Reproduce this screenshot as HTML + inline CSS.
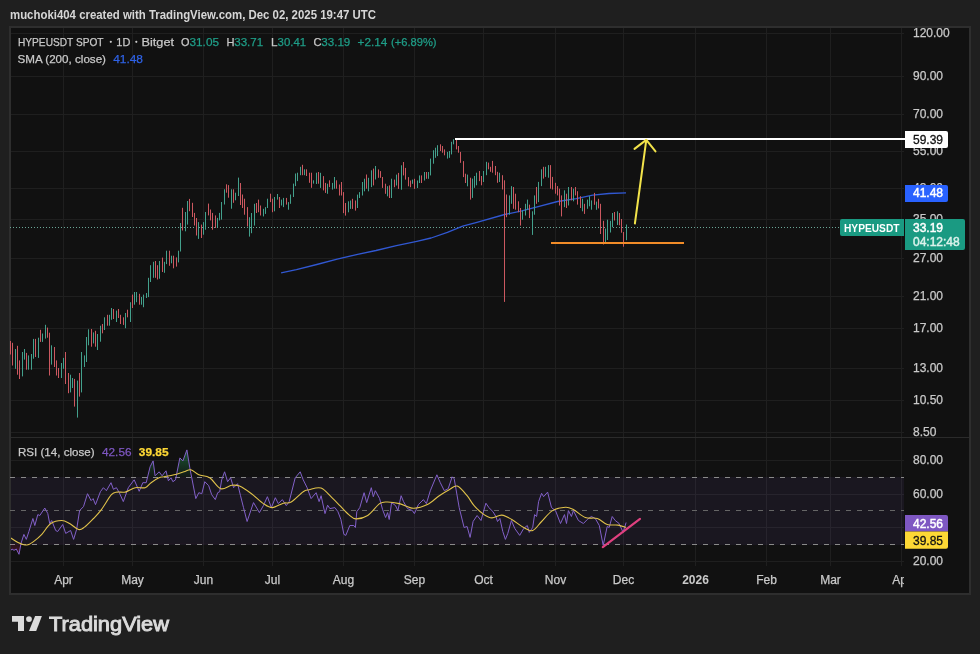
<!DOCTYPE html><html><head><meta charset="utf-8"><style>
html,body{margin:0;padding:0;background:#1f1f1f;width:980px;height:654px;overflow:hidden}
svg{position:absolute;left:0;top:0;will-change:transform}
text{font-family:"Liberation Sans", sans-serif}
</style></head><body>
<svg width="980" height="654" viewBox="0 0 980 654">
<text x="10" y="19.4" font-size="12.6" font-weight="700" fill="#d6d6d6" textLength="366" lengthAdjust="spacingAndGlyphs">muchoki404 created with TradingView.com, Dec 02, 2025 19:47 UTC</text>
<rect x="10" y="27" width="960" height="567" fill="#111111" stroke="#2e2e2e" stroke-width="2"/>
<defs><clipPath id="cp"><rect x="10" y="28" width="894" height="409"/></clipPath>
<clipPath id="cr"><rect x="11" y="438" width="893" height="127"/></clipPath></defs>
<line x1="63.5" y1="28" x2="63.5" y2="566" stroke="#1f1f1f" stroke-width="1"/>
<line x1="132.5" y1="28" x2="132.5" y2="566" stroke="#1f1f1f" stroke-width="1"/>
<line x1="203.5" y1="28" x2="203.5" y2="566" stroke="#1f1f1f" stroke-width="1"/>
<line x1="272.5" y1="28" x2="272.5" y2="566" stroke="#1f1f1f" stroke-width="1"/>
<line x1="343.5" y1="28" x2="343.5" y2="566" stroke="#1f1f1f" stroke-width="1"/>
<line x1="414.5" y1="28" x2="414.5" y2="566" stroke="#1f1f1f" stroke-width="1"/>
<line x1="483.5" y1="28" x2="483.5" y2="566" stroke="#1f1f1f" stroke-width="1"/>
<line x1="555.5" y1="28" x2="555.5" y2="566" stroke="#1f1f1f" stroke-width="1"/>
<line x1="623.5" y1="28" x2="623.5" y2="566" stroke="#1f1f1f" stroke-width="1"/>
<line x1="695.5" y1="28" x2="695.5" y2="566" stroke="#1f1f1f" stroke-width="1"/>
<line x1="766.5" y1="28" x2="766.5" y2="566" stroke="#1f1f1f" stroke-width="1"/>
<line x1="830.5" y1="28" x2="830.5" y2="566" stroke="#1f1f1f" stroke-width="1"/>
<line x1="901.5" y1="28" x2="901.5" y2="566" stroke="#1f1f1f" stroke-width="1"/>
<line x1="11" y1="33.5" x2="904" y2="33.5" stroke="#1f1f1f" stroke-width="1"/>
<line x1="11" y1="76.5" x2="904" y2="76.5" stroke="#1f1f1f" stroke-width="1"/>
<line x1="11" y1="114.5" x2="904" y2="114.5" stroke="#1f1f1f" stroke-width="1"/>
<line x1="11" y1="151.5" x2="904" y2="151.5" stroke="#1f1f1f" stroke-width="1"/>
<line x1="11" y1="188.5" x2="904" y2="188.5" stroke="#1f1f1f" stroke-width="1"/>
<line x1="11" y1="219.5" x2="904" y2="219.5" stroke="#1f1f1f" stroke-width="1"/>
<line x1="11" y1="258.5" x2="904" y2="258.5" stroke="#1f1f1f" stroke-width="1"/>
<line x1="11" y1="296.5" x2="904" y2="296.5" stroke="#1f1f1f" stroke-width="1"/>
<line x1="11" y1="328.5" x2="904" y2="328.5" stroke="#1f1f1f" stroke-width="1"/>
<line x1="11" y1="368.5" x2="904" y2="368.5" stroke="#1f1f1f" stroke-width="1"/>
<line x1="11" y1="400.5" x2="904" y2="400.5" stroke="#1f1f1f" stroke-width="1"/>
<line x1="11" y1="432.5" x2="904" y2="432.5" stroke="#1f1f1f" stroke-width="1"/>
<line x1="11" y1="460.5" x2="904" y2="460.5" stroke="#1f1f1f" stroke-width="1"/>
<line x1="11" y1="494.5" x2="904" y2="494.5" stroke="#1f1f1f" stroke-width="1"/>
<line x1="11" y1="527.5" x2="904" y2="527.5" stroke="#1f1f1f" stroke-width="1"/>
<line x1="11" y1="561.5" x2="904" y2="561.5" stroke="#1f1f1f" stroke-width="1"/>
<line x1="11" y1="437.5" x2="969" y2="437.5" stroke="#2b2b2b" stroke-width="1"/>
<line x1="10" y1="227.5" x2="904" y2="227.5" stroke="#6aa596" stroke-width="1" stroke-dasharray="1 2"/>
<polyline points="281.1,272.9 296.4,269.6 316.8,264.5 337.2,259.2 357.6,254.3 376.0,250.5 396.4,245.6 416.8,241.3 431.1,238.0 447.4,232.3 462.7,226.2 476.0,222.6 504.6,214.5 521.9,210.9 537.2,206.8 557.6,201.5 576.3,198.6 592.7,195.1 609.0,193.5 626.0,192.9" fill="none" stroke="#3158d2" stroke-width="1.3" stroke-linejoin="round"/>
<g clip-path="url(#cp)">
<rect x="10" y="341.0" width="1" height="13.5" fill="#cc5860"/>
<rect x="12" y="342.8" width="1" height="22.7" fill="#cc5860"/>
<rect x="15" y="349.0" width="1" height="19.8" fill="#43a08c"/>
<rect x="17" y="345.8" width="1" height="28.9" fill="#cc5860"/>
<rect x="19" y="360.4" width="1" height="18.6" fill="#cc5860"/>
<rect x="22" y="352.0" width="1" height="24.4" fill="#43a08c"/>
<rect x="24" y="349.0" width="1" height="10.6" fill="#43a08c"/>
<rect x="26" y="352.9" width="1" height="16.8" fill="#cc5860"/>
<rect x="28" y="355.4" width="1" height="14.3" fill="#43a08c"/>
<rect x="31" y="354.0" width="1" height="15.7" fill="#43a08c"/>
<rect x="33" y="338.9" width="1" height="19.8" fill="#43a08c"/>
<rect x="35" y="338.9" width="1" height="18.1" fill="#cc5860"/>
<rect x="38" y="337.7" width="1" height="20.2" fill="#43a08c"/>
<rect x="40" y="329.8" width="1" height="12.1" fill="#cc5860"/>
<rect x="42" y="333.5" width="1" height="8.4" fill="#43a08c"/>
<rect x="45" y="324.8" width="1" height="13.8" fill="#43a08c"/>
<rect x="47" y="327.6" width="1" height="10.1" fill="#cc5860"/>
<rect x="49" y="332.7" width="1" height="42.8" fill="#cc5860"/>
<rect x="51" y="345.3" width="1" height="19.3" fill="#43a08c"/>
<rect x="54" y="347.0" width="1" height="20.0" fill="#cc5860"/>
<rect x="56" y="360.4" width="1" height="15.1" fill="#cc5860"/>
<rect x="58" y="368.0" width="1" height="10.0" fill="#cc5860"/>
<rect x="61" y="363.0" width="1" height="15.0" fill="#43a08c"/>
<rect x="63" y="357.9" width="1" height="10.9" fill="#43a08c"/>
<rect x="65" y="352.0" width="1" height="32.0" fill="#cc5860"/>
<rect x="68" y="373.0" width="1" height="20.2" fill="#cc5860"/>
<rect x="70" y="374.7" width="1" height="17.7" fill="#43a08c"/>
<rect x="72" y="378.0" width="1" height="10.0" fill="#43a08c"/>
<rect x="74" y="378.9" width="1" height="27.7" fill="#cc5860"/>
<rect x="77" y="380.6" width="1" height="37.0" fill="#43a08c"/>
<rect x="79" y="373.0" width="1" height="23.6" fill="#cc5860"/>
<rect x="81" y="352.0" width="1" height="40.4" fill="#43a08c"/>
<rect x="84" y="355.4" width="1" height="11.6" fill="#43a08c"/>
<rect x="86" y="337.0" width="1" height="25.0" fill="#43a08c"/>
<rect x="88" y="329.3" width="1" height="16.0" fill="#43a08c"/>
<rect x="91" y="329.0" width="1" height="17.7" fill="#cc5860"/>
<rect x="93" y="332.4" width="1" height="11.0" fill="#43a08c"/>
<rect x="95" y="330.8" width="1" height="15.9" fill="#cc5860"/>
<rect x="97" y="334.0" width="1" height="16.0" fill="#43a08c"/>
<rect x="100" y="325.7" width="1" height="16.0" fill="#43a08c"/>
<rect x="102" y="324.0" width="1" height="9.3" fill="#cc5860"/>
<rect x="104" y="317.3" width="1" height="12.7" fill="#43a08c"/>
<rect x="107" y="314.8" width="1" height="10.9" fill="#cc5860"/>
<rect x="109" y="314.8" width="1" height="10.9" fill="#43a08c"/>
<rect x="111" y="308.0" width="1" height="11.8" fill="#43a08c"/>
<rect x="113" y="309.0" width="1" height="10.0" fill="#cc5860"/>
<rect x="116" y="310.6" width="1" height="11.4" fill="#43a08c"/>
<rect x="118" y="309.0" width="1" height="9.0" fill="#cc5860"/>
<rect x="120" y="314.8" width="1" height="9.2" fill="#cc5860"/>
<rect x="123" y="317.3" width="1" height="7.6" fill="#cc5860"/>
<rect x="125" y="313.0" width="1" height="15.2" fill="#43a08c"/>
<rect x="127" y="309.7" width="1" height="7.6" fill="#cc5860"/>
<rect x="130" y="302.2" width="1" height="19.8" fill="#43a08c"/>
<rect x="132" y="294.6" width="1" height="13.4" fill="#cc5860"/>
<rect x="134" y="292.0" width="1" height="12.7" fill="#43a08c"/>
<rect x="136" y="292.0" width="1" height="10.2" fill="#43a08c"/>
<rect x="139" y="293.8" width="1" height="10.9" fill="#cc5860"/>
<rect x="141" y="297.0" width="1" height="7.7" fill="#43a08c"/>
<rect x="143" y="294.6" width="1" height="12.6" fill="#43a08c"/>
<rect x="146" y="293.0" width="1" height="5.0" fill="#43a08c"/>
<rect x="148" y="277.8" width="1" height="19.3" fill="#43a08c"/>
<rect x="150" y="265.2" width="1" height="16.8" fill="#43a08c"/>
<rect x="153" y="261.8" width="1" height="16.0" fill="#43a08c"/>
<rect x="155" y="261.0" width="1" height="16.8" fill="#cc5860"/>
<rect x="157" y="265.2" width="1" height="14.3" fill="#cc5860"/>
<rect x="159" y="261.0" width="1" height="17.7" fill="#43a08c"/>
<rect x="162" y="257.6" width="1" height="14.4" fill="#cc5860"/>
<rect x="164" y="261.8" width="1" height="11.0" fill="#43a08c"/>
<rect x="166" y="250.7" width="1" height="13.4" fill="#43a08c"/>
<rect x="169" y="250.7" width="1" height="15.1" fill="#cc5860"/>
<rect x="171" y="255.7" width="1" height="7.6" fill="#43a08c"/>
<rect x="173" y="255.7" width="1" height="12.6" fill="#cc5860"/>
<rect x="176" y="257.4" width="1" height="9.2" fill="#cc5860"/>
<rect x="178" y="250.7" width="1" height="11.7" fill="#43a08c"/>
<rect x="180" y="223.0" width="1" height="28.5" fill="#43a08c"/>
<rect x="182" y="207.8" width="1" height="22.7" fill="#cc5860"/>
<rect x="185" y="212.0" width="1" height="19.3" fill="#43a08c"/>
<rect x="187" y="201.0" width="1" height="23.6" fill="#43a08c"/>
<rect x="189" y="198.9" width="1" height="12.3" fill="#cc5860"/>
<rect x="192" y="202.8" width="1" height="14.2" fill="#cc5860"/>
<rect x="194" y="212.9" width="1" height="12.6" fill="#cc5860"/>
<rect x="196" y="218.0" width="1" height="17.5" fill="#cc5860"/>
<rect x="198" y="222.1" width="1" height="16.8" fill="#43a08c"/>
<rect x="201" y="224.6" width="1" height="13.4" fill="#cc5860"/>
<rect x="203" y="222.1" width="1" height="12.6" fill="#43a08c"/>
<rect x="205" y="212.0" width="1" height="17.7" fill="#43a08c"/>
<rect x="208" y="203.6" width="1" height="11.8" fill="#cc5860"/>
<rect x="210" y="209.5" width="1" height="10.9" fill="#cc5860"/>
<rect x="212" y="212.9" width="1" height="16.8" fill="#cc5860"/>
<rect x="215" y="215.4" width="1" height="12.6" fill="#cc5860"/>
<rect x="217" y="217.9" width="1" height="9.2" fill="#43a08c"/>
<rect x="219" y="212.9" width="1" height="7.5" fill="#43a08c"/>
<rect x="221" y="202.0" width="1" height="17.6" fill="#43a08c"/>
<rect x="224" y="189.3" width="1" height="15.2" fill="#43a08c"/>
<rect x="226" y="184.3" width="1" height="8.4" fill="#cc5860"/>
<rect x="228" y="185.1" width="1" height="12.6" fill="#cc5860"/>
<rect x="231" y="189.3" width="1" height="19.4" fill="#43a08c"/>
<rect x="233" y="189.3" width="1" height="13.5" fill="#cc5860"/>
<rect x="235" y="192.7" width="1" height="7.6" fill="#43a08c"/>
<rect x="238" y="177.6" width="1" height="18.4" fill="#43a08c"/>
<rect x="240" y="183.0" width="1" height="22.0" fill="#cc5860"/>
<rect x="242" y="194.5" width="1" height="13.5" fill="#cc5860"/>
<rect x="244" y="198.7" width="1" height="16.0" fill="#cc5860"/>
<rect x="247" y="207.1" width="1" height="19.4" fill="#cc5860"/>
<rect x="249" y="217.2" width="1" height="19.4" fill="#43a08c"/>
<rect x="251" y="213.0" width="1" height="20.2" fill="#43a08c"/>
<rect x="254" y="203.8" width="1" height="21.8" fill="#43a08c"/>
<rect x="256" y="203.0" width="1" height="10.0" fill="#cc5860"/>
<rect x="258" y="199.6" width="1" height="12.6" fill="#cc5860"/>
<rect x="260" y="205.5" width="1" height="10.0" fill="#cc5860"/>
<rect x="263" y="208.8" width="1" height="7.6" fill="#43a08c"/>
<rect x="265" y="207.1" width="1" height="6.8" fill="#43a08c"/>
<rect x="267" y="198.7" width="1" height="9.3" fill="#43a08c"/>
<rect x="270" y="193.7" width="1" height="8.4" fill="#cc5860"/>
<rect x="272" y="198.7" width="1" height="13.5" fill="#cc5860"/>
<rect x="274" y="197.0" width="1" height="14.3" fill="#43a08c"/>
<rect x="277" y="194.0" width="1" height="5.6" fill="#43a08c"/>
<rect x="279" y="197.0" width="1" height="11.0" fill="#cc5860"/>
<rect x="281" y="199.6" width="1" height="5.9" fill="#43a08c"/>
<rect x="283" y="197.9" width="1" height="9.2" fill="#43a08c"/>
<rect x="286" y="197.9" width="1" height="6.7" fill="#cc5860"/>
<rect x="288" y="202.1" width="1" height="7.6" fill="#43a08c"/>
<rect x="290" y="194.5" width="1" height="9.3" fill="#43a08c"/>
<rect x="293" y="183.6" width="1" height="13.4" fill="#43a08c"/>
<rect x="295" y="173.5" width="1" height="12.6" fill="#43a08c"/>
<rect x="297" y="172.7" width="1" height="8.4" fill="#43a08c"/>
<rect x="300" y="166.8" width="1" height="8.4" fill="#43a08c"/>
<rect x="302" y="164.8" width="1" height="10.4" fill="#cc5860"/>
<rect x="304" y="169.3" width="1" height="5.9" fill="#43a08c"/>
<rect x="306" y="169.3" width="1" height="6.7" fill="#cc5860"/>
<rect x="309" y="172.7" width="1" height="10.1" fill="#cc5860"/>
<rect x="311" y="172.7" width="1" height="15.1" fill="#cc5860"/>
<rect x="313" y="180.3" width="1" height="3.3" fill="#43a08c"/>
<rect x="316" y="172.7" width="1" height="11.3" fill="#43a08c"/>
<rect x="318" y="172.0" width="1" height="11.7" fill="#cc5860"/>
<rect x="320" y="172.8" width="1" height="15.1" fill="#43a08c"/>
<rect x="323" y="176.1" width="1" height="14.3" fill="#cc5860"/>
<rect x="325" y="182.9" width="1" height="10.0" fill="#cc5860"/>
<rect x="327" y="183.7" width="1" height="10.1" fill="#43a08c"/>
<rect x="329" y="180.3" width="1" height="6.8" fill="#cc5860"/>
<rect x="332" y="182.9" width="1" height="6.7" fill="#43a08c"/>
<rect x="334" y="177.0" width="1" height="11.7" fill="#43a08c"/>
<rect x="336" y="180.3" width="1" height="8.4" fill="#cc5860"/>
<rect x="339" y="184.5" width="1" height="11.0" fill="#cc5860"/>
<rect x="341" y="182.0" width="1" height="13.5" fill="#cc5860"/>
<rect x="343" y="192.1" width="1" height="21.0" fill="#cc5860"/>
<rect x="345" y="203.0" width="1" height="12.6" fill="#cc5860"/>
<rect x="348" y="201.3" width="1" height="11.0" fill="#43a08c"/>
<rect x="350" y="200.5" width="1" height="8.4" fill="#43a08c"/>
<rect x="352" y="198.8" width="1" height="10.1" fill="#cc5860"/>
<rect x="355" y="200.5" width="1" height="10.1" fill="#cc5860"/>
<rect x="357" y="194.6" width="1" height="13.4" fill="#43a08c"/>
<rect x="359" y="192.1" width="1" height="5.9" fill="#43a08c"/>
<rect x="362" y="182.0" width="1" height="13.5" fill="#43a08c"/>
<rect x="364" y="178.7" width="1" height="12.6" fill="#43a08c"/>
<rect x="366" y="174.5" width="1" height="14.2" fill="#cc5860"/>
<rect x="368" y="177.8" width="1" height="13.5" fill="#43a08c"/>
<rect x="371" y="170.3" width="1" height="16.8" fill="#43a08c"/>
<rect x="373" y="168.6" width="1" height="16.8" fill="#cc5860"/>
<rect x="375" y="166.0" width="1" height="13.5" fill="#43a08c"/>
<rect x="378" y="169.4" width="1" height="8.4" fill="#cc5860"/>
<rect x="380" y="171.1" width="1" height="6.7" fill="#cc5860"/>
<rect x="382" y="177.0" width="1" height="10.9" fill="#cc5860"/>
<rect x="385" y="183.7" width="1" height="10.1" fill="#cc5860"/>
<rect x="387" y="186.2" width="1" height="10.1" fill="#43a08c"/>
<rect x="389" y="185.4" width="1" height="12.6" fill="#cc5860"/>
<rect x="391" y="178.7" width="1" height="19.3" fill="#43a08c"/>
<rect x="394" y="179.6" width="1" height="7.6" fill="#cc5860"/>
<rect x="396" y="174.6" width="1" height="10.9" fill="#43a08c"/>
<rect x="398" y="172.9" width="1" height="16.0" fill="#cc5860"/>
<rect x="401" y="165.3" width="1" height="24.4" fill="#43a08c"/>
<rect x="403" y="162.0" width="1" height="13.4" fill="#cc5860"/>
<rect x="405" y="167.9" width="1" height="11.7" fill="#cc5860"/>
<rect x="408" y="177.1" width="1" height="9.2" fill="#cc5860"/>
<rect x="410" y="180.5" width="1" height="6.7" fill="#cc5860"/>
<rect x="412" y="179.6" width="1" height="4.2" fill="#43a08c"/>
<rect x="414" y="178.8" width="1" height="10.1" fill="#cc5860"/>
<rect x="417" y="180.5" width="1" height="7.5" fill="#43a08c"/>
<rect x="419" y="175.4" width="1" height="7.6" fill="#43a08c"/>
<rect x="421" y="175.4" width="1" height="7.6" fill="#cc5860"/>
<rect x="424" y="172.0" width="1" height="8.5" fill="#43a08c"/>
<rect x="426" y="172.0" width="1" height="6.8" fill="#cc5860"/>
<rect x="428" y="172.0" width="1" height="6.8" fill="#43a08c"/>
<rect x="430" y="158.6" width="1" height="16.8" fill="#43a08c"/>
<rect x="433" y="150.2" width="1" height="13.5" fill="#43a08c"/>
<rect x="435" y="147.7" width="1" height="10.1" fill="#43a08c"/>
<rect x="437" y="145.2" width="1" height="10.9" fill="#43a08c"/>
<rect x="440" y="144.3" width="1" height="6.7" fill="#cc5860"/>
<rect x="442" y="146.0" width="1" height="6.7" fill="#cc5860"/>
<rect x="444" y="149.4" width="1" height="5.9" fill="#cc5860"/>
<rect x="447" y="151.9" width="1" height="6.7" fill="#43a08c"/>
<rect x="449" y="151.0" width="1" height="6.8" fill="#43a08c"/>
<rect x="451" y="141.8" width="1" height="12.6" fill="#43a08c"/>
<rect x="453" y="139.3" width="1" height="5.0" fill="#43a08c"/>
<rect x="456" y="139.3" width="1" height="10.1" fill="#cc5860"/>
<rect x="458" y="146.0" width="1" height="6.7" fill="#cc5860"/>
<rect x="460" y="151.9" width="1" height="10.9" fill="#cc5860"/>
<rect x="463" y="161.1" width="1" height="16.0" fill="#cc5860"/>
<rect x="465" y="173.7" width="1" height="9.3" fill="#cc5860"/>
<rect x="467" y="174.6" width="1" height="11.7" fill="#43a08c"/>
<rect x="470" y="177.7" width="1" height="21.9" fill="#cc5860"/>
<rect x="472" y="178.6" width="1" height="19.3" fill="#43a08c"/>
<rect x="474" y="176.0" width="1" height="11.8" fill="#43a08c"/>
<rect x="476" y="172.7" width="1" height="12.6" fill="#43a08c"/>
<rect x="479" y="171.0" width="1" height="10.1" fill="#cc5860"/>
<rect x="481" y="176.0" width="1" height="9.3" fill="#cc5860"/>
<rect x="483" y="171.0" width="1" height="11.0" fill="#43a08c"/>
<rect x="486" y="161.8" width="1" height="13.4" fill="#43a08c"/>
<rect x="488" y="162.6" width="1" height="6.7" fill="#cc5860"/>
<rect x="490" y="166.8" width="1" height="5.0" fill="#cc5860"/>
<rect x="492" y="160.9" width="1" height="11.8" fill="#cc5860"/>
<rect x="495" y="166.0" width="1" height="9.2" fill="#cc5860"/>
<rect x="497" y="171.8" width="1" height="11.0" fill="#cc5860"/>
<rect x="499" y="172.7" width="1" height="9.3" fill="#43a08c"/>
<rect x="502" y="175.2" width="1" height="14.3" fill="#cc5860"/>
<rect x="504" y="180.3" width="1" height="121.6" fill="#cc5860"/>
<rect x="506" y="194.5" width="1" height="22.7" fill="#cc5860"/>
<rect x="509" y="195.4" width="1" height="19.3" fill="#43a08c"/>
<rect x="511" y="186.1" width="1" height="17.7" fill="#43a08c"/>
<rect x="513" y="187.0" width="1" height="21.8" fill="#cc5860"/>
<rect x="515" y="193.7" width="1" height="16.0" fill="#cc5860"/>
<rect x="518" y="201.3" width="1" height="10.9" fill="#cc5860"/>
<rect x="520" y="208.0" width="1" height="17.6" fill="#cc5860"/>
<rect x="522" y="210.5" width="1" height="9.2" fill="#43a08c"/>
<rect x="525" y="203.8" width="1" height="11.7" fill="#43a08c"/>
<rect x="527" y="199.6" width="1" height="10.1" fill="#43a08c"/>
<rect x="529" y="204.6" width="1" height="13.5" fill="#cc5860"/>
<rect x="532" y="211.3" width="1" height="23.6" fill="#43a08c"/>
<rect x="534" y="195.4" width="1" height="19.3" fill="#43a08c"/>
<rect x="536" y="187.0" width="1" height="16.8" fill="#cc5860"/>
<rect x="538" y="181.9" width="1" height="20.2" fill="#43a08c"/>
<rect x="541" y="169.3" width="1" height="16.8" fill="#43a08c"/>
<rect x="543" y="166.8" width="1" height="11.8" fill="#cc5860"/>
<rect x="545" y="166.8" width="1" height="10.1" fill="#43a08c"/>
<rect x="548" y="165.1" width="1" height="12.6" fill="#43a08c"/>
<rect x="550" y="165.1" width="1" height="23.6" fill="#cc5860"/>
<rect x="552" y="176.9" width="1" height="12.6" fill="#cc5860"/>
<rect x="555" y="182.8" width="1" height="10.9" fill="#cc5860"/>
<rect x="557" y="186.1" width="1" height="9.3" fill="#cc5860"/>
<rect x="559" y="188.7" width="1" height="16.8" fill="#cc5860"/>
<rect x="561" y="195.4" width="1" height="21.0" fill="#cc5860"/>
<rect x="564" y="190.3" width="1" height="16.8" fill="#43a08c"/>
<rect x="566" y="193.7" width="1" height="14.3" fill="#cc5860"/>
<rect x="568" y="187.0" width="1" height="18.5" fill="#43a08c"/>
<rect x="571" y="187.0" width="1" height="13.4" fill="#cc5860"/>
<rect x="573" y="188.7" width="1" height="12.6" fill="#43a08c"/>
<rect x="575" y="187.0" width="1" height="8.4" fill="#cc5860"/>
<rect x="577" y="191.2" width="1" height="13.4" fill="#cc5860"/>
<rect x="580" y="196.2" width="1" height="11.8" fill="#cc5860"/>
<rect x="582" y="198.7" width="1" height="12.6" fill="#43a08c"/>
<rect x="584" y="203.8" width="1" height="10.1" fill="#cc5860"/>
<rect x="587" y="199.6" width="1" height="9.2" fill="#43a08c"/>
<rect x="589" y="196.2" width="1" height="10.1" fill="#43a08c"/>
<rect x="591" y="200.4" width="1" height="9.3" fill="#43a08c"/>
<rect x="594" y="192.9" width="1" height="11.9" fill="#cc5860"/>
<rect x="596" y="201.6" width="1" height="8.2" fill="#43a08c"/>
<rect x="598" y="198.8" width="1" height="9.6" fill="#cc5860"/>
<rect x="600" y="203.8" width="1" height="30.2" fill="#cc5860"/>
<rect x="603" y="220.8" width="1" height="23.7" fill="#cc5860"/>
<rect x="605" y="228.6" width="1" height="14.4" fill="#43a08c"/>
<rect x="607" y="219.7" width="1" height="20.3" fill="#43a08c"/>
<rect x="610" y="220.8" width="1" height="11.7" fill="#43a08c"/>
<rect x="612" y="213.0" width="1" height="14.2" fill="#43a08c"/>
<rect x="614" y="212.0" width="1" height="8.5" fill="#cc5860"/>
<rect x="617" y="211.3" width="1" height="13.7" fill="#43a08c"/>
<rect x="619" y="213.0" width="1" height="12.3" fill="#cc5860"/>
<rect x="621" y="219.0" width="1" height="13.7" fill="#cc5860"/>
<rect x="623" y="232.0" width="1" height="14.7" fill="#cc5860"/>
<rect x="626" y="224.5" width="1" height="15.7" fill="#43a08c"/>
</g>
<line x1="455" y1="139" x2="905" y2="139" stroke="#ffffff" stroke-width="2"/>
<line x1="551" y1="243" x2="684" y2="243" stroke="#f28c28" stroke-width="2"/>
<polyline points="634.9,223.5 646.3,139.9" fill="none" stroke="#f2e34a" stroke-width="2" stroke-linecap="round"/>
<polyline points="634.5,148.9 646.3,139.9 655.5,151.4" fill="none" stroke="#f2e34a" stroke-width="2" stroke-linecap="round" stroke-linejoin="round"/>
<rect x="11" y="477" width="893" height="68" fill="#7e57c2" fill-opacity="0.09"/>
<line x1="10" y1="477.5" x2="904" y2="477.5" stroke="#8a8a8a" stroke-width="1" stroke-dasharray="5 6"/>
<line x1="10" y1="510.5" x2="904" y2="510.5" stroke="#666666" stroke-width="1" stroke-dasharray="5 6"/>
<line x1="10" y1="544.5" x2="904" y2="544.5" stroke="#8a8a8a" stroke-width="1" stroke-dasharray="5 6"/>
<g clip-path="url(#cr)">
<clipPath id="ob"><rect x="11" y="438" width="893" height="38.9"/></clipPath>
<clipPath id="os"><rect x="11" y="543.5" width="893" height="21.5"/></clipPath>
<linearGradient id="gob" gradientUnits="userSpaceOnUse" x1="0" y1="445" x2="0" y2="477"><stop offset="0" stop-color="#26a65b" stop-opacity="0.55"/><stop offset="1" stop-color="#26a65b" stop-opacity="0.05"/></linearGradient>
<linearGradient id="gos" gradientUnits="userSpaceOnUse" x1="0" y1="544" x2="0" y2="561"><stop offset="0" stop-color="#c2185b" stop-opacity="0.1"/><stop offset="1" stop-color="#c2185b" stop-opacity="0.5"/></linearGradient>
<polygon clip-path="url(#ob)" points="10.0,476.9 10.0,551.3 12.0,549.0 14.0,550.3 16.3,549.0 19.0,554.3 21.0,543.4 23.9,534.4 26.3,539.4 28.9,531.5 32.9,518.5 34.8,525.5 37.8,514.6 39.8,515.5 44.8,508.0 47.8,513.6 49.7,523.5 51.7,520.5 55.7,530.5 57.7,531.5 62.7,524.5 65.7,533.4 70.6,530.5 73.6,539.4 76.6,529.5 79.6,510.6 83.5,506.6 87.5,493.7 91.1,500.6 93.1,498.6 95.5,504.6 100.4,491.7 103.4,487.7 106.4,490.7 111.0,482.7 113.4,489.3 116.4,487.7 119.3,492.7 123.3,501.6 128.3,487.7 134.2,479.8 139.2,491.3 142.8,482.7 146.2,482.7 150.1,466.8 153.1,460.9 155.1,475.8 159.1,471.8 162.1,475.8 166.0,470.8 168.4,480.8 171.0,477.8 172.9,481.7 175.5,479.8 179.9,457.9 182.9,460.9 186.9,449.9 189.8,467.8 195.8,498.6 198.8,492.7 201.8,493.7 204.8,481.7 208.7,485.7 211.7,494.7 215.3,499.6 217.7,492.7 219.7,491.7 221.7,479.8 224.6,471.8 227.6,481.7 230.6,477.8 233.6,487.7 237.6,483.7 240.5,495.7 243.5,507.6 247.1,521.5 253.5,502.6 259.4,512.6 263.4,505.6 267.4,496.7 271.4,507.6 275.3,497.7 278.3,503.6 282.3,499.6 286.3,505.6 289.2,501.6 295.2,477.8 300.2,471.8 303.2,479.8 307.1,487.7 311.1,498.6 316.1,492.7 319.1,501.6 321.1,495.7 325.0,513.6 327.6,505.2 329.9,508.6 334.9,507.6 337.9,511.6 340.9,519.5 343.9,534.4 345.8,535.4 349.8,525.5 353.8,525.5 355.4,527.5 356.8,511.6 359.8,507.6 364.1,492.7 366.7,502.6 371.3,487.7 373.3,496.7 375.3,490.7 379.6,498.6 382.6,509.6 385.6,517.5 387.6,512.6 389.2,519.5 391.6,502.6 395.5,505.6 397.9,510.6 401.1,495.7 403.5,501.6 407.5,508.6 412.4,510.6 414.4,513.6 418.4,504.6 423.4,499.6 426.4,503.6 430.3,490.7 436.9,474.8 440.3,482.7 444.3,490.7 448.2,488.7 452.2,476.8 454.2,478.8 459.2,507.6 464.1,527.5 467.1,526.5 470.1,537.4 473.1,521.5 477.1,515.5 481.0,520.5 485.9,503.2 488.9,507.6 492.9,511.6 495.9,516.5 497.5,521.5 499.9,518.5 502.8,531.5 505.4,539.4 507.8,533.4 511.4,520.5 514.8,528.5 519.7,535.4 523.7,528.5 527.3,525.5 529.3,532.4 532.7,527.5 534.6,514.6 536.6,516.5 538.6,501.6 541.6,493.3 543.6,496.7 547.6,492.1 551.5,507.6 555.5,510.6 560.5,523.5 564.5,514.6 566.5,523.5 568.4,510.6 571.4,516.5 573.4,510.6 578.4,520.5 583.4,523.5 587.3,519.5 591.3,516.5 595.3,518.5 599.3,525.5 603.2,545.4 607.2,526.5 609.2,527.5 612.2,516.5 615.2,520.5 619.1,523.5 623.1,532.4 626.1,522.5 626.1,476.9" fill="url(#gob)"/>
<polygon clip-path="url(#os)" points="10.0,543.5 10.0,551.3 12.0,549.0 14.0,550.3 16.3,549.0 19.0,554.3 21.0,543.4 23.9,534.4 26.3,539.4 28.9,531.5 32.9,518.5 34.8,525.5 37.8,514.6 39.8,515.5 44.8,508.0 47.8,513.6 49.7,523.5 51.7,520.5 55.7,530.5 57.7,531.5 62.7,524.5 65.7,533.4 70.6,530.5 73.6,539.4 76.6,529.5 79.6,510.6 83.5,506.6 87.5,493.7 91.1,500.6 93.1,498.6 95.5,504.6 100.4,491.7 103.4,487.7 106.4,490.7 111.0,482.7 113.4,489.3 116.4,487.7 119.3,492.7 123.3,501.6 128.3,487.7 134.2,479.8 139.2,491.3 142.8,482.7 146.2,482.7 150.1,466.8 153.1,460.9 155.1,475.8 159.1,471.8 162.1,475.8 166.0,470.8 168.4,480.8 171.0,477.8 172.9,481.7 175.5,479.8 179.9,457.9 182.9,460.9 186.9,449.9 189.8,467.8 195.8,498.6 198.8,492.7 201.8,493.7 204.8,481.7 208.7,485.7 211.7,494.7 215.3,499.6 217.7,492.7 219.7,491.7 221.7,479.8 224.6,471.8 227.6,481.7 230.6,477.8 233.6,487.7 237.6,483.7 240.5,495.7 243.5,507.6 247.1,521.5 253.5,502.6 259.4,512.6 263.4,505.6 267.4,496.7 271.4,507.6 275.3,497.7 278.3,503.6 282.3,499.6 286.3,505.6 289.2,501.6 295.2,477.8 300.2,471.8 303.2,479.8 307.1,487.7 311.1,498.6 316.1,492.7 319.1,501.6 321.1,495.7 325.0,513.6 327.6,505.2 329.9,508.6 334.9,507.6 337.9,511.6 340.9,519.5 343.9,534.4 345.8,535.4 349.8,525.5 353.8,525.5 355.4,527.5 356.8,511.6 359.8,507.6 364.1,492.7 366.7,502.6 371.3,487.7 373.3,496.7 375.3,490.7 379.6,498.6 382.6,509.6 385.6,517.5 387.6,512.6 389.2,519.5 391.6,502.6 395.5,505.6 397.9,510.6 401.1,495.7 403.5,501.6 407.5,508.6 412.4,510.6 414.4,513.6 418.4,504.6 423.4,499.6 426.4,503.6 430.3,490.7 436.9,474.8 440.3,482.7 444.3,490.7 448.2,488.7 452.2,476.8 454.2,478.8 459.2,507.6 464.1,527.5 467.1,526.5 470.1,537.4 473.1,521.5 477.1,515.5 481.0,520.5 485.9,503.2 488.9,507.6 492.9,511.6 495.9,516.5 497.5,521.5 499.9,518.5 502.8,531.5 505.4,539.4 507.8,533.4 511.4,520.5 514.8,528.5 519.7,535.4 523.7,528.5 527.3,525.5 529.3,532.4 532.7,527.5 534.6,514.6 536.6,516.5 538.6,501.6 541.6,493.3 543.6,496.7 547.6,492.1 551.5,507.6 555.5,510.6 560.5,523.5 564.5,514.6 566.5,523.5 568.4,510.6 571.4,516.5 573.4,510.6 578.4,520.5 583.4,523.5 587.3,519.5 591.3,516.5 595.3,518.5 599.3,525.5 603.2,545.4 607.2,526.5 609.2,527.5 612.2,516.5 615.2,520.5 619.1,523.5 623.1,532.4 626.1,522.5 626.1,543.5" fill="url(#gos)"/>
<polyline points="10.0,551.3 12.0,549.0 14.0,550.3 16.3,549.0 19.0,554.3 21.0,543.4 23.9,534.4 26.3,539.4 28.9,531.5 32.9,518.5 34.8,525.5 37.8,514.6 39.8,515.5 44.8,508.0 47.8,513.6 49.7,523.5 51.7,520.5 55.7,530.5 57.7,531.5 62.7,524.5 65.7,533.4 70.6,530.5 73.6,539.4 76.6,529.5 79.6,510.6 83.5,506.6 87.5,493.7 91.1,500.6 93.1,498.6 95.5,504.6 100.4,491.7 103.4,487.7 106.4,490.7 111.0,482.7 113.4,489.3 116.4,487.7 119.3,492.7 123.3,501.6 128.3,487.7 134.2,479.8 139.2,491.3 142.8,482.7 146.2,482.7 150.1,466.8 153.1,460.9 155.1,475.8 159.1,471.8 162.1,475.8 166.0,470.8 168.4,480.8 171.0,477.8 172.9,481.7 175.5,479.8 179.9,457.9 182.9,460.9 186.9,449.9 189.8,467.8 195.8,498.6 198.8,492.7 201.8,493.7 204.8,481.7 208.7,485.7 211.7,494.7 215.3,499.6 217.7,492.7 219.7,491.7 221.7,479.8 224.6,471.8 227.6,481.7 230.6,477.8 233.6,487.7 237.6,483.7 240.5,495.7 243.5,507.6 247.1,521.5 253.5,502.6 259.4,512.6 263.4,505.6 267.4,496.7 271.4,507.6 275.3,497.7 278.3,503.6 282.3,499.6 286.3,505.6 289.2,501.6 295.2,477.8 300.2,471.8 303.2,479.8 307.1,487.7 311.1,498.6 316.1,492.7 319.1,501.6 321.1,495.7 325.0,513.6 327.6,505.2 329.9,508.6 334.9,507.6 337.9,511.6 340.9,519.5 343.9,534.4 345.8,535.4 349.8,525.5 353.8,525.5 355.4,527.5 356.8,511.6 359.8,507.6 364.1,492.7 366.7,502.6 371.3,487.7 373.3,496.7 375.3,490.7 379.6,498.6 382.6,509.6 385.6,517.5 387.6,512.6 389.2,519.5 391.6,502.6 395.5,505.6 397.9,510.6 401.1,495.7 403.5,501.6 407.5,508.6 412.4,510.6 414.4,513.6 418.4,504.6 423.4,499.6 426.4,503.6 430.3,490.7 436.9,474.8 440.3,482.7 444.3,490.7 448.2,488.7 452.2,476.8 454.2,478.8 459.2,507.6 464.1,527.5 467.1,526.5 470.1,537.4 473.1,521.5 477.1,515.5 481.0,520.5 485.9,503.2 488.9,507.6 492.9,511.6 495.9,516.5 497.5,521.5 499.9,518.5 502.8,531.5 505.4,539.4 507.8,533.4 511.4,520.5 514.8,528.5 519.7,535.4 523.7,528.5 527.3,525.5 529.3,532.4 532.7,527.5 534.6,514.6 536.6,516.5 538.6,501.6 541.6,493.3 543.6,496.7 547.6,492.1 551.5,507.6 555.5,510.6 560.5,523.5 564.5,514.6 566.5,523.5 568.4,510.6 571.4,516.5 573.4,510.6 578.4,520.5 583.4,523.5 587.3,519.5 591.3,516.5 595.3,518.5 599.3,525.5 603.2,545.4 607.2,526.5 609.2,527.5 612.2,516.5 615.2,520.5 619.1,523.5 623.1,532.4 626.1,522.5" fill="none" stroke="#8260c8" stroke-width="1" stroke-linejoin="round"/>
<path d="M10.0,537.4 C11.3,538.2 15.2,541.1 18.0,542.4 C20.8,543.7 24.3,545.2 26.9,545.0 C29.5,544.8 31.3,543.2 33.8,541.4 C36.3,539.6 39.0,537.4 41.8,534.4 C44.6,531.4 47.4,525.8 50.7,523.5 C54.0,521.2 58.6,520.5 61.7,520.5 C64.8,520.5 66.8,522.0 69.6,523.5 C72.4,525.0 76.1,528.9 78.6,529.5 C81.1,530.1 82.0,528.9 84.5,527.1 C87.0,525.3 90.7,521.4 93.5,518.5 C96.3,515.6 98.4,513.6 101.4,509.6 C104.4,505.6 108.8,497.6 111.4,494.7 C114.1,491.8 115.0,492.5 117.3,492.1 C119.6,491.7 122.3,492.8 125.3,492.1 C128.3,491.4 131.9,488.4 135.2,487.7 C138.5,487.0 142.5,488.5 145.2,487.7 C147.8,486.9 148.8,484.3 151.1,482.7 C153.4,481.1 156.9,478.8 159.1,477.8 C161.2,476.8 161.5,477.3 164.0,476.8 C166.5,476.3 170.7,475.6 174.0,474.8 C177.3,474.0 181.1,472.6 183.9,471.8 C186.7,471.0 188.3,469.3 190.8,469.8 C193.3,470.3 195.7,473.5 198.8,474.8 C202.0,476.1 206.0,475.5 209.7,477.8 C213.3,480.1 217.0,487.4 220.7,488.7 C224.3,489.9 228.5,485.7 231.6,485.3 C234.7,484.9 236.2,484.7 239.5,486.1 C242.8,487.5 247.5,490.8 251.5,493.7 C255.5,496.6 259.9,501.3 263.4,503.6 C266.9,505.9 269.0,507.7 272.3,507.6 C275.6,507.5 280.2,504.1 283.3,503.2 C286.4,502.3 287.9,503.9 291.2,502.0 C294.5,500.1 300.2,493.8 303.2,491.7 C306.2,489.6 306.1,490.3 309.1,489.7 C312.1,489.1 317.3,486.8 321.1,488.1 C324.9,489.4 328.8,494.8 331.9,497.7 C335.0,500.6 337.1,502.8 339.9,505.6 C342.7,508.4 346.1,512.4 348.8,514.6 C351.5,516.8 352.7,518.8 355.8,518.9 C358.9,519.0 363.7,518.0 367.7,515.5 C371.7,513.0 376.3,505.9 379.6,503.6 C382.9,501.4 384.3,502.0 387.6,502.0 C390.9,502.0 395.2,502.6 399.5,503.6 C403.8,504.6 408.8,508.0 413.4,508.2 C418.0,508.4 423.1,506.7 427.4,504.6 C431.7,502.5 435.7,498.2 439.3,495.7 C442.9,493.2 446.2,491.3 449.2,489.7 C452.2,488.1 454.2,485.1 457.2,486.1 C460.2,487.1 464.3,492.4 467.1,495.7 C469.9,498.9 471.3,502.5 474.1,505.6 C476.9,508.8 481.0,512.6 484.0,514.6 C487.0,516.6 488.9,517.8 491.9,517.9 C494.9,518.0 498.5,514.8 501.8,515.1 C505.1,515.4 508.1,517.4 511.8,519.5 C515.5,521.6 520.2,525.7 523.7,527.5 C527.2,529.3 529.7,531.5 532.7,530.5 C535.7,529.5 538.3,524.8 541.6,521.5 C544.9,518.2 548.5,513.0 552.5,510.6 C556.5,508.2 562.0,507.4 565.5,507.2 C569.0,507.0 570.1,507.9 573.4,509.6 C576.7,511.3 581.3,516.0 585.3,517.5 C589.3,519.0 593.6,517.3 597.3,518.5 C600.9,519.7 603.7,523.4 607.2,524.5 C610.7,525.6 615.0,524.6 618.1,525.1 C621.2,525.6 624.8,527.1 626.1,527.5" fill="none" stroke="#e0c24a" stroke-width="1.1"/>
</g>
<line x1="602.8" y1="547.2" x2="640" y2="518.8" stroke="#e0407f" stroke-width="2.2" stroke-linecap="round"/>
<text x="913" y="37.0" font-size="12" fill="#c9c9c9" stroke="#c9c9c9" stroke-width="0.25">120.00</text>
<text x="913" y="80.0" font-size="12" fill="#c9c9c9" stroke="#c9c9c9" stroke-width="0.25">90.00</text>
<text x="913" y="118.0" font-size="12" fill="#c9c9c9" stroke="#c9c9c9" stroke-width="0.25">70.00</text>
<text x="913" y="155.0" font-size="12" fill="#c9c9c9" stroke="#c9c9c9" stroke-width="0.25">55.00</text>
<text x="913" y="192.0" font-size="12" fill="#c9c9c9" stroke="#c9c9c9" stroke-width="0.25">43.00</text>
<text x="913" y="223.0" font-size="12" fill="#c9c9c9" stroke="#c9c9c9" stroke-width="0.25">35.00</text>
<text x="913" y="262.0" font-size="12" fill="#c9c9c9" stroke="#c9c9c9" stroke-width="0.25">27.00</text>
<text x="913" y="300.0" font-size="12" fill="#c9c9c9" stroke="#c9c9c9" stroke-width="0.25">21.00</text>
<text x="913" y="332.0" font-size="12" fill="#c9c9c9" stroke="#c9c9c9" stroke-width="0.25">17.00</text>
<text x="913" y="372.0" font-size="12" fill="#c9c9c9" stroke="#c9c9c9" stroke-width="0.25">13.00</text>
<text x="913" y="404.0" font-size="12" fill="#c9c9c9" stroke="#c9c9c9" stroke-width="0.25">10.50</text>
<text x="913" y="436.0" font-size="12" fill="#c9c9c9" stroke="#c9c9c9" stroke-width="0.25">8.50</text>
<text x="913" y="464.0" font-size="12" fill="#c9c9c9" stroke="#c9c9c9" stroke-width="0.25">80.00</text>
<text x="913" y="498.0" font-size="12" fill="#c9c9c9" stroke="#c9c9c9" stroke-width="0.25">60.00</text>
<text x="913" y="565.0" font-size="12" fill="#c9c9c9" stroke="#c9c9c9" stroke-width="0.25">20.00</text>
<text x="63.5" y="584" font-size="12" fill="#c9c9c9" stroke="#c9c9c9" stroke-width="0.25" text-anchor="middle">Apr</text>
<text x="132.5" y="584" font-size="12" fill="#c9c9c9" stroke="#c9c9c9" stroke-width="0.25" text-anchor="middle">May</text>
<text x="203.5" y="584" font-size="12" fill="#c9c9c9" stroke="#c9c9c9" stroke-width="0.25" text-anchor="middle">Jun</text>
<text x="272.5" y="584" font-size="12" fill="#c9c9c9" stroke="#c9c9c9" stroke-width="0.25" text-anchor="middle">Jul</text>
<text x="343.5" y="584" font-size="12" fill="#c9c9c9" stroke="#c9c9c9" stroke-width="0.25" text-anchor="middle">Aug</text>
<text x="414.5" y="584" font-size="12" fill="#c9c9c9" stroke="#c9c9c9" stroke-width="0.25" text-anchor="middle">Sep</text>
<text x="483.5" y="584" font-size="12" fill="#c9c9c9" stroke="#c9c9c9" stroke-width="0.25" text-anchor="middle">Oct</text>
<text x="555.5" y="584" font-size="12" fill="#c9c9c9" stroke="#c9c9c9" stroke-width="0.25" text-anchor="middle">Nov</text>
<text x="623.5" y="584" font-size="12" fill="#c9c9c9" stroke="#c9c9c9" stroke-width="0.25" text-anchor="middle">Dec</text>
<text x="695.5" y="584" font-size="12" fill="#c9c9c9" stroke="#c9c9c9" stroke-width="0" text-anchor="middle" font-weight="700">2026</text>
<text x="766.5" y="584" font-size="12" fill="#c9c9c9" stroke="#c9c9c9" stroke-width="0.25" text-anchor="middle">Feb</text>
<text x="830.5" y="584" font-size="12" fill="#c9c9c9" stroke="#c9c9c9" stroke-width="0.25" text-anchor="middle">Mar</text>
<text x="901.5" y="584" font-size="12" fill="#c9c9c9" stroke="#c9c9c9" stroke-width="0.25" text-anchor="middle">Apr</text>
<rect x="904" y="566" width="65" height="27" fill="#111111"/>
<path d="M905,131 h41 a2,2 0 0 1 2,2 v13 a2,2 0 0 1 -2,2 h-41 z" fill="#ffffff"/>
<text x="913" y="143.8" font-size="12" fill="#131313" stroke="#131313" stroke-width="0.3">59.39</text>
<path d="M905,185 h41 a2,2 0 0 1 2,2 v13 a2,2 0 0 1 -2,2 h-41 z" fill="#2962ff"/>
<text x="913" y="197.3" font-size="12" fill="#ffffff" stroke="#ffffff" stroke-width="0.45">41.48</text>
<path d="M905,219 h58 a2,2 0 0 1 2,2 v27 a2,2 0 0 1 -2,2 h-58 z" fill="#1a9a82"/>
<text x="913" y="231.7" font-size="12" fill="#ffffff" stroke="#ffffff" stroke-width="0.45">33.19</text>
<text x="913" y="245.5" font-size="12" fill="#dcf3ec" stroke="#dcf3ec" stroke-width="0.45">04:12:48</text>
<path d="M904,219 h-62 a2,2 0 0 0 -2,2 v13 a2,2 0 0 0 2,2 h62 z" fill="#1a9a82"/>
<text x="844" y="231.7" font-size="11" font-weight="700" fill="#ffffff" textLength="55.5" lengthAdjust="spacingAndGlyphs">HYPEUSDT</text>
<path d="M905,515 h41 a2,2 0 0 1 2,2 v14.5 h-43 z" fill="#7e57c2"/>
<text x="913" y="528" font-size="12" fill="#ffffff" stroke="#ffffff" stroke-width="0.45">42.56</text>
<path d="M905,531.5 h43 v15.3 a2,2 0 0 1 -2,2 h-41 z" fill="#fdd835"/>
<text x="913" y="545" font-size="12" fill="#131313" stroke="#131313" stroke-width="0.3">39.85</text>
<text x="18.0" y="45.9" font-size="11.5" fill="#c9c9c9" stroke="#c9c9c9" stroke-width="0.25" textLength="85.5" lengthAdjust="spacingAndGlyphs">HYPEUSDT SPOT</text>
<text x="116.3" y="45.9" font-size="11.5" fill="#c9c9c9" stroke="#c9c9c9" stroke-width="0.25" textLength="14.0" lengthAdjust="spacingAndGlyphs">1D</text>
<text x="141.5" y="45.9" font-size="11.5" fill="#c9c9c9" stroke="#c9c9c9" stroke-width="0.25" textLength="32.5" lengthAdjust="spacingAndGlyphs">Bitget</text>
<circle cx="110.8" cy="41.8" r="1.1" fill="#c9c9c9"/>
<circle cx="136.3" cy="41.8" r="1.1" fill="#c9c9c9"/>
<text x="181.0" y="45.9" font-size="11.5" fill="#c9c9c9" stroke="#c9c9c9" stroke-width="0.25" textLength="8.5" lengthAdjust="spacingAndGlyphs">O</text>
<text x="189.5" y="45.9" font-size="11.5" fill="#1f9e88" stroke="#1f9e88" stroke-width="0.25" textLength="29.5" lengthAdjust="spacingAndGlyphs">31.05</text>
<text x="226.5" y="45.9" font-size="11.5" fill="#c9c9c9" stroke="#c9c9c9" stroke-width="0.25" textLength="8.0" lengthAdjust="spacingAndGlyphs">H</text>
<text x="234.2" y="45.9" font-size="11.5" fill="#1f9e88" stroke="#1f9e88" stroke-width="0.25" textLength="29.0" lengthAdjust="spacingAndGlyphs">33.71</text>
<text x="271.0" y="45.9" font-size="11.5" fill="#c9c9c9" stroke="#c9c9c9" stroke-width="0.25" textLength="6.5" lengthAdjust="spacingAndGlyphs">L</text>
<text x="277.6" y="45.9" font-size="11.5" fill="#1f9e88" stroke="#1f9e88" stroke-width="0.25" textLength="28.5" lengthAdjust="spacingAndGlyphs">30.41</text>
<text x="313.6" y="45.9" font-size="11.5" fill="#c9c9c9" stroke="#c9c9c9" stroke-width="0.25" textLength="8.0" lengthAdjust="spacingAndGlyphs">C</text>
<text x="321.3" y="45.9" font-size="11.5" fill="#1f9e88" stroke="#1f9e88" stroke-width="0.25" textLength="29.0" lengthAdjust="spacingAndGlyphs">33.19</text>
<text x="357.5" y="45.9" font-size="11.5" fill="#1f9e88" stroke="#1f9e88" stroke-width="0.25" textLength="29.8" lengthAdjust="spacingAndGlyphs">+2.14</text>
<text x="391.0" y="45.9" font-size="11.5" fill="#1f9e88" stroke="#1f9e88" stroke-width="0.25" textLength="45.5" lengthAdjust="spacingAndGlyphs">(+6.89%)</text>
<text x="17.5" y="62.6" font-size="11.5" fill="#c9c9c9" stroke="#c9c9c9" stroke-width="0.25" textLength="88.5" lengthAdjust="spacingAndGlyphs">SMA (200, close)</text>
<text x="113.2" y="62.6" font-size="11.5" fill="#2f62e6" stroke="#2f62e6" stroke-width="0.25" textLength="29.8" lengthAdjust="spacingAndGlyphs">41.48</text>
<text x="18.0" y="456.4" font-size="11.5" fill="#c9c9c9" stroke="#c9c9c9" stroke-width="0.25" textLength="76.5" lengthAdjust="spacingAndGlyphs">RSI (14, close)</text>
<text x="102.0" y="456.4" font-size="11.5" fill="#7e57c2" stroke="#7e57c2" stroke-width="0.25" textLength="29.5" lengthAdjust="spacingAndGlyphs">42.56</text>
<text x="138.8" y="456.4" font-size="11.5" fill="#fdd835" stroke="#fdd835" stroke-width="0.25" font-weight="700" textLength="29.8" lengthAdjust="spacingAndGlyphs">39.85</text>
<g fill="#dbdbdb"><path d="M12,616 h12 v15 h-6 v-9.2 h-6 z"/><circle cx="29" cy="619.1" r="2.9"/><path d="M35.1,616 h6.8 l-5.7,15 h-7.2 z"/></g>
<text x="49" y="630.5" font-size="20" fill="#dbdbdb" stroke="#dbdbdb" stroke-width="0.9" textLength="120" lengthAdjust="spacingAndGlyphs">TradingView</text>
</svg></body></html>
